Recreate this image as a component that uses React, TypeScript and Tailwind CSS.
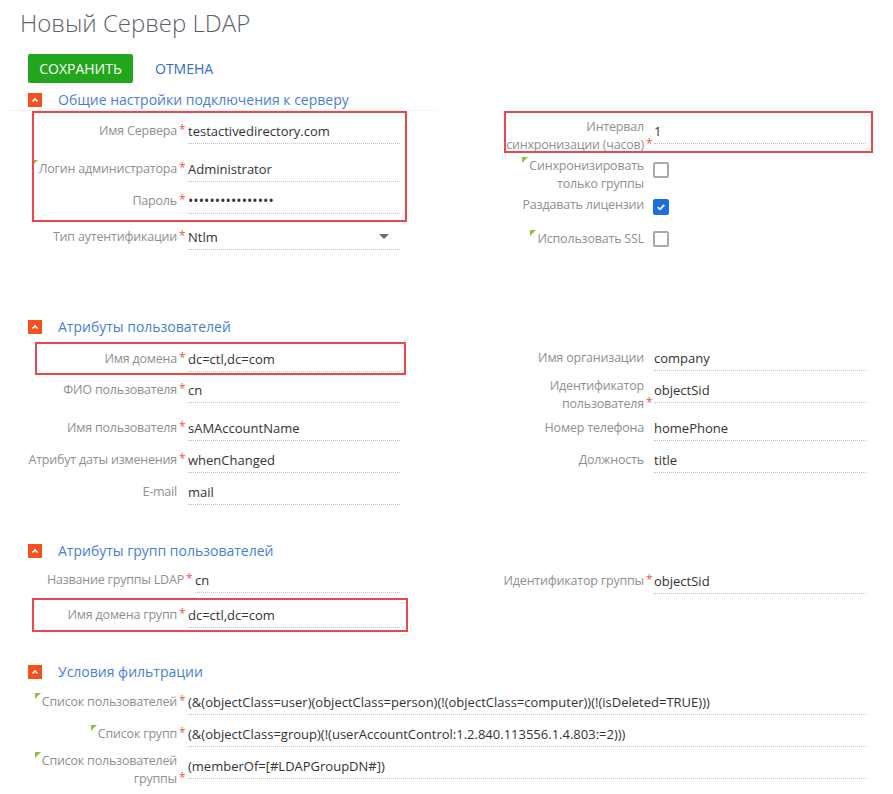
import React from "react";

const LABEL = "text-[12.5px] tracking-[-0.2px] leading-[18px] text-[#8f8f8f] text-right whitespace-nowrap";
const VALUE =
  "text-[13px] leading-[20px] text-[#333] pb-[2px] border-b border-dotted border-[#c2c2c2] whitespace-nowrap";

function Tri() {
  return (
    <span className="inline-block w-0 h-0 border-t-[6px] border-t-[#8cc43f] border-r-[6px] border-r-transparent align-top mr-[1px]" />
  );
}

function Star() {
  return <span className="relative top-[-1px] text-[12px] leading-[18px] text-[#f0563f]">*</span>;
}

function Header({ title, mt }: { title: string; mt: string }) {
  return (
    <div className={`flex items-center h-[20px] ${mt}`}>
      <div className="ml-[28px] w-[14px] h-[14px] bg-[#f4511e] flex items-center justify-center">
        <svg width="14" height="14" viewBox="0 0 14 14">
          <polyline points="4.5,8.5 7,6 9.5,8.5" fill="none" stroke="#fff" strokeWidth="1.6" />
        </svg>
      </div>
      <div className="ml-[16px] text-[14px] leading-[20px] text-[#4a7ed6]">{title}</div>
    </div>
  );
}

type RowProps = {
  mt: string;
  labelW: string;
  slotW: string;
  valueW: string;
  lines: string[];
  required?: boolean;
  marker?: boolean;
  value?: React.ReactNode;
  valueMt?: string;
  labelPt?: string;
  starPt?: string;
  check?: "on" | "off";
  checkMt?: string;
  dropdown?: boolean;
  valueCls?: string;
};

function Row(p: RowProps) {
  return (
    <div className={`flex items-start leading-[18px] ${p.mt}`}>
      <div className={`${p.labelW} ${LABEL} ${p.labelPt ?? "pt-[1px]"}`}>
        {p.lines.map((l, i) => (
          <div key={i}>
            {i === 0 && p.marker ? <Tri /> : null}
            {l}
          </div>
        ))}
      </div>
      <div className={`${p.slotW} pl-[2px] text-[12px] leading-[18px] ${p.starPt ?? "pt-[1px]"}`}>
        {p.required ? <Star /> : null}
      </div>
      {p.check ? (
        <div className={`${p.checkMt ?? ""} ml-[-1px]`}>
          {p.check === "on" ? (
            <div className="w-[16px] h-[16px] rounded-[2px] bg-[#1b6fe0] flex items-center justify-center">
              <svg width="10" height="10" viewBox="0 0 10 10">
                <polyline points="1.8,5.2 4,7.3 8.3,2.8" fill="none" stroke="#fff" strokeWidth="1.7" />
              </svg>
            </div>
          ) : (
            <div className="w-[16px] h-[16px] rounded-[2px] border-2 border-[#a9a9a9]" />
          )}
        </div>
      ) : (
        <div
          className={`${p.valueW} ${VALUE} ${p.valueMt ?? ""} ${
            p.dropdown ? "flex items-center justify-between pr-[11px]" : ""
          }`}
        >
          <span className={p.valueCls ?? ""}>{p.value}</span>
          {p.dropdown ? (
            <svg width="10" height="6" viewBox="0 0 10 6">
              <polygon points="0,0 10,0 5,5" fill="#6b6b6b" />
            </svg>
          ) : null}
        </div>
      )}
    </div>
  );
}

const L = { labelW: "w-[177px]", slotW: "w-[11px]", valueW: "w-[212px]" };
const R = { labelW: "w-[204px]", slotW: "w-[10px]", valueW: "w-[212px]" };

export default function App() {
  return (
    <div className="relative w-[893px] h-[794px] bg-white overflow-hidden font-['Open_Sans',sans-serif]">
      <div className="pl-[20px] pt-[6px] text-[24px] leading-[34px] font-light text-[#5e5e6e]">Новый Сервер LDAP</div>

      <div className="flex items-center mt-[14px]">
        <div className="ml-[28px] w-[105px] h-[29px] rounded-[2px] bg-[#22a61c] text-white text-[14px] leading-[20px] flex items-center justify-center">
          СОХРАНИТЬ
        </div>
        <div className="ml-[22px] text-[14px] leading-[20px] text-[#2f6bd7]">ОТМЕНА</div>
      </div>

      <Header title="Общие настройки подключения к серверу" mt="mt-[7px]" />
      <div className="ml-[10px] w-[427px] h-px bg-[#f3f3f3]" />

      <div className="flex">
        <div className="w-[440px]">
          <Row {...L} mt="mt-[10px]" lines={["Имя Сервера"]} required value="testactivedirectory.com" />
          <Row {...L} mt="mt-[15px]" lines={["Логин администратора"]} required marker value="Administrator" />
          <Row
            {...L}
            mt="mt-[9px]"
            lines={["Пароль"]}
            required
            value={"••••••••••••••••"}
            valueCls="text-[14px] tracking-[0.1px]"
          />
          <Row {...L} mt="mt-[13px]" lines={["Тип аутентификации"]} required value="Ntlm" dropdown />
        </div>
        <div className="flex-1">
          <Row
            {...R}
            mt="mt-[7px]"
            lines={["Интервал", "синхронизации (часов)"]}
            required
            labelPt="pt-0"
            starPt="pt-[18px]"
            valueMt="mt-[3px]"
            value="1"
          />
          <Row
            {...R}
            mt="mt-[3px]"
            lines={["Синхронизировать", "только группы"]}
            labelPt="pt-0"
            marker
            check="off"
            checkMt="mt-[5px]"
          />
          <Row {...R} mt="mt-[3px]" lines={["Раздавать лицензии"]} labelPt="pt-0" check="on" checkMt="mt-[3px]" />
          <Row {...R} mt="mt-[15px]" lines={["Использовать SSL"]} labelPt="pt-0" marker check="off" checkMt="mt-[1px]" />
        </div>
      </div>

      <Header title="Атрибуты пользователей" mt="mt-[67px]" />
      <div className="flex">
        <div className="w-[440px]">
          <Row {...L} mt="mt-[12px]" lines={["Имя домена"]} required value="dc=ctl,dc=com" />
          <Row {...L} mt="mt-[8px]" lines={["ФИО пользователя"]} required value="cn" />
          <Row {...L} mt="mt-[15px]" lines={["Имя пользователя"]} required value="sAMAccountName" />
          <Row {...L} mt="mt-[9px]" lines={["Атрибут даты изменения"]} required value="whenChanged" />
          <Row {...L} mt="mt-[9px]" lines={["E-mail"]} value="mail" />
        </div>
        <div className="flex-1">
          <Row {...R} mt="mt-[11px]" lines={["Имя организации"]} value="company" />
          <Row
            {...R}
            mt="mt-[6px]"
            lines={["Идентификатор", "пользователя"]}
            required
            labelPt="pt-0"
            starPt="pt-[18px]"
            valueMt="mt-[3px]"
            value="objectSid"
          />
          <Row {...R} mt="mt-[5px]" lines={["Номер телефона"]} value="homePhone" />
          <Row {...R} mt="mt-[9px]" lines={["Должность"]} value="title" />
        </div>
      </div>

      <Header title="Атрибуты групп пользователей" mt="mt-[36px]" />
      <div className="flex">
        <div className="w-[440px]">
          <Row
            labelW="w-[184px]"
            slotW="w-[11px]"
            valueW="w-[205px]"
            mt="mt-[9px]"
            lines={["Название группы LDAP"]}
            required
            value="cn"
          />
          <Row {...L} mt="mt-[12px]" lines={["Имя домена групп"]} required value="dc=ctl,dc=com" />
        </div>
        <div className="flex-1">
          <Row {...R} mt="mt-[10px]" lines={["Идентификатор группы"]} required value="objectSid" />
        </div>
      </div>

      <Header title="Условия фильтрации" mt="mt-[34px]" />
      <Row
        labelW="w-[177px]"
        slotW="w-[11px]"
        valueW="w-[678px]"
        mt="mt-[10px]"
        lines={["Список пользователей"]}
        required
        marker
        value="(&(objectClass=user)(objectClass=person)(!(objectClass=computer))(!(isDeleted=TRUE)))"
      />
      <Row
        labelW="w-[177px]"
        slotW="w-[11px]"
        valueW="w-[678px]"
        mt="mt-[9px]"
        lines={["Список групп"]}
        required
        marker
        value="(&(objectClass=group)(!(userAccountControl:1.2.840.113556.1.4.803:=2)))"
      />
      <Row
        labelW="w-[177px]"
        slotW="w-[11px]"
        valueW="w-[678px]"
        mt="mt-[5px]"
        lines={["Список пользователей", "группы"]}
        required
        marker
        labelPt="pt-0"
        starPt="pt-[18px]"
        valueMt="mt-[4px]"
        value="(memberOf=[#LDAPGroupDN#])"
      />

      <div className="absolute left-[32px] top-[111px] w-[375px] h-[111px] border-2 border-[#f0464b]" />
      <div className="absolute left-[504px] top-[111px] w-[369px] h-[42px] border-2 border-[#f0464b]" />
      <div className="absolute left-[35px] top-[342px] w-[371px] h-[33px] border-2 border-[#f0464b]" />
      <div className="absolute left-[32px] top-[598px] w-[376px] h-[34px] border-2 border-[#f0464b]" />
    </div>
  );
}
